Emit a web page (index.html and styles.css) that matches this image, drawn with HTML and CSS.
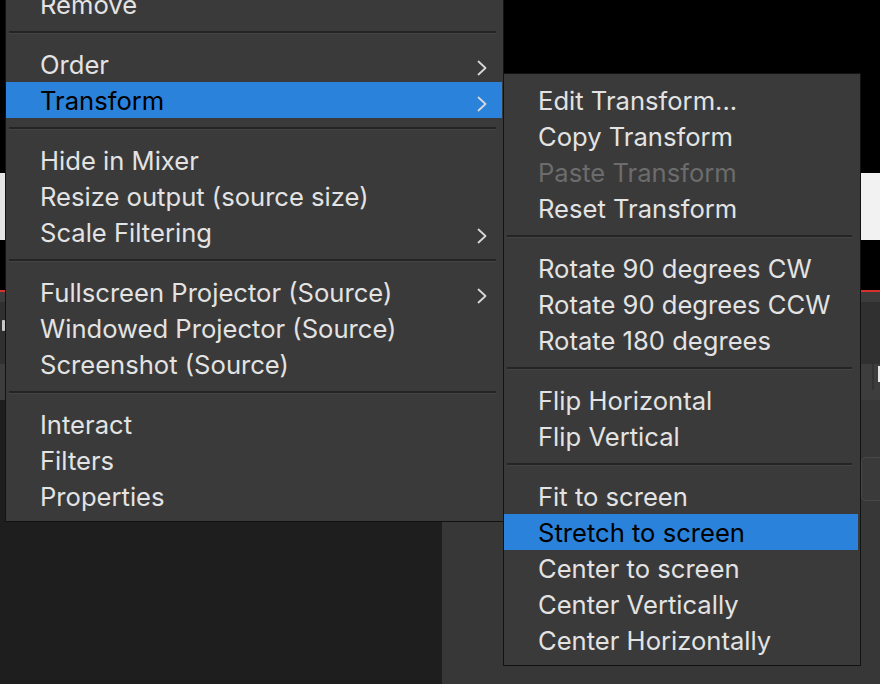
FILE: index.html
```html
<!DOCTYPE html>
<html lang="en">
<head>
<meta charset="utf-8">
<title>Context menu</title>
<link rel="stylesheet" href="styles.css">
</head>
<body>
<div class="app">
  <div class="preview"><div class="canvas"></div></div>
  <div class="redline"></div>
  <div class="dock">
    <div class="dock-top"></div>
    <div class="dock-row"><div class="knob"></div></div>
    <div class="dock-tabs"><div class="tab-div"></div><div class="tab-label"></div></div>
    <div class="dock-bottom">
      <div class="scenes"></div>
      <div class="sources"><div class="src-box"></div></div>
    </div>
  </div>

  <div class="menu main-menu">
    <div class="item">Remove</div>
    <div class="sep"></div>
    <div class="item">Order<svg class="chev" viewBox="0 0 10 16"><path d="M1.5 1.5 L8.5 8 L1.5 14.5"/></svg></div>
    <div class="item active">Transform<svg class="chev" viewBox="0 0 10 16"><path d="M1.5 1.5 L8.5 8 L1.5 14.5"/></svg></div>
    <div class="sep"></div>
    <div class="item">Hide in Mixer</div>
    <div class="item">Resize output (source size)</div>
    <div class="item">Scale Filtering<svg class="chev" viewBox="0 0 10 16"><path d="M1.5 1.5 L8.5 8 L1.5 14.5"/></svg></div>
    <div class="sep"></div>
    <div class="item">Fullscreen Projector (Source)<svg class="chev" viewBox="0 0 10 16"><path d="M1.5 1.5 L8.5 8 L1.5 14.5"/></svg></div>
    <div class="item">Windowed Projector (Source)</div>
    <div class="item">Screenshot (Source)</div>
    <div class="sep"></div>
    <div class="item">Interact</div>
    <div class="item">Filters</div>
    <div class="item">Properties</div>
  </div>

  <div class="menu sub-menu">
    <div class="item">Edit Transform...</div>
    <div class="item">Copy Transform</div>
    <div class="item disabled">Paste Transform</div>
    <div class="item">Reset Transform</div>
    <div class="sep"></div>
    <div class="item">Rotate 90 degrees CW</div>
    <div class="item">Rotate 90 degrees CCW</div>
    <div class="item">Rotate 180 degrees</div>
    <div class="sep"></div>
    <div class="item">Flip Horizontal</div>
    <div class="item">Flip Vertical</div>
    <div class="sep"></div>
    <div class="item">Fit to screen</div>
    <div class="item active">Stretch to screen</div>
    <div class="item">Center to screen</div>
    <div class="item">Center Vertically</div>
    <div class="item">Center Horizontally</div>
  </div>
</div>
</body>
</html>
```

FILE: styles.css
```css
* { box-sizing: border-box; }
html, body { margin: 0; padding: 0; }
body {
  width: 880px;
  height: 684px;
  overflow: hidden;
  background: #000;
  font-family: Inter, "Noto Sans", sans-serif;
}
.app {
  position: relative;
  width: 880px;
  height: 684px;
  overflow: hidden;
  display: flex;
  flex-direction: column;
  background: #000;
}
.preview {
  height: 290px;
  padding-top: 173px;
  background: #000;
}
.canvas {
  height: 67px;
  background: linear-gradient(90deg, #e4e4e4, #f2f2f2);
}
.redline { height: 2px; background: #d8302a; }
.dock { flex: 1; display: flex; flex-direction: column; }
.dock-top { height: 10px; background: #3c3c3c; }
.dock-row {
  height: 62px;
  background: #303030;
  padding: 18px 0 0 2px;
}
.knob {
  width: 3px;
  height: 11px;
  border-radius: 1px;
  background: #c8c8c8;
}
.dock-tabs {
  height: 36px;
  background: #3d3d3d;
  display: flex;
  justify-content: flex-end;
  gap: 4px;
  padding-bottom: 10px;
}
.tab-div { width: 2px; background: #333; }
.tab-label { width: 2px; height: 16px; margin-top: 2px; background: #e8e8e8; }
.dock-bottom { flex: 1; display: flex; }
.scenes { width: 442px; background: #1e1e1e; }
.sources {
  flex: 1;
  background: #373737;
  display: flex;
  justify-content: flex-end;
  align-items: flex-start;
}
.src-box {
  width: 19px;
  height: 44px;
  margin-top: 57px;
  border: 1px solid #474747;
  border-right: none;
  border-radius: 5px 0 0 5px;
  background: #3a3a3a;
}

/* context menus overlay the window */
.menu {
  position: absolute;
  background: #3a3a3a;
  border: 1px solid #121212;
  padding: 8px 1px 7px 0;
  color: #e3e3e3;
  font-size: 25.6px;
}
.main-menu { left: 5px; top: -23px; width: 499px; }
.sub-menu { left: 503px; top: 73px; width: 358px; padding-right: 2px; }
.item {
  position: relative;
  height: 36px;
  line-height: 38px;
  padding-left: 34px;
  white-space: nowrap;
}
.item.active { background: #2a82da; color: #000; }
.item.disabled { color: #6c6c6c; }
.sep {
  height: 24px;
  padding-top: 9px;
  margin: 0 6px 0 3px;
}
.sep::before {
  content: "";
  display: block;
  height: 2px;
  background: #242424;
  border-bottom: 1px solid #444;
}
.chev {
  position: absolute;
  right: 15px;
  top: 14px;
  width: 10px;
  height: 16px;
  fill: none;
  stroke: #d8d8d8;
  stroke-width: 1.8;
  stroke-linecap: round;
  stroke-linejoin: round;
}
```
